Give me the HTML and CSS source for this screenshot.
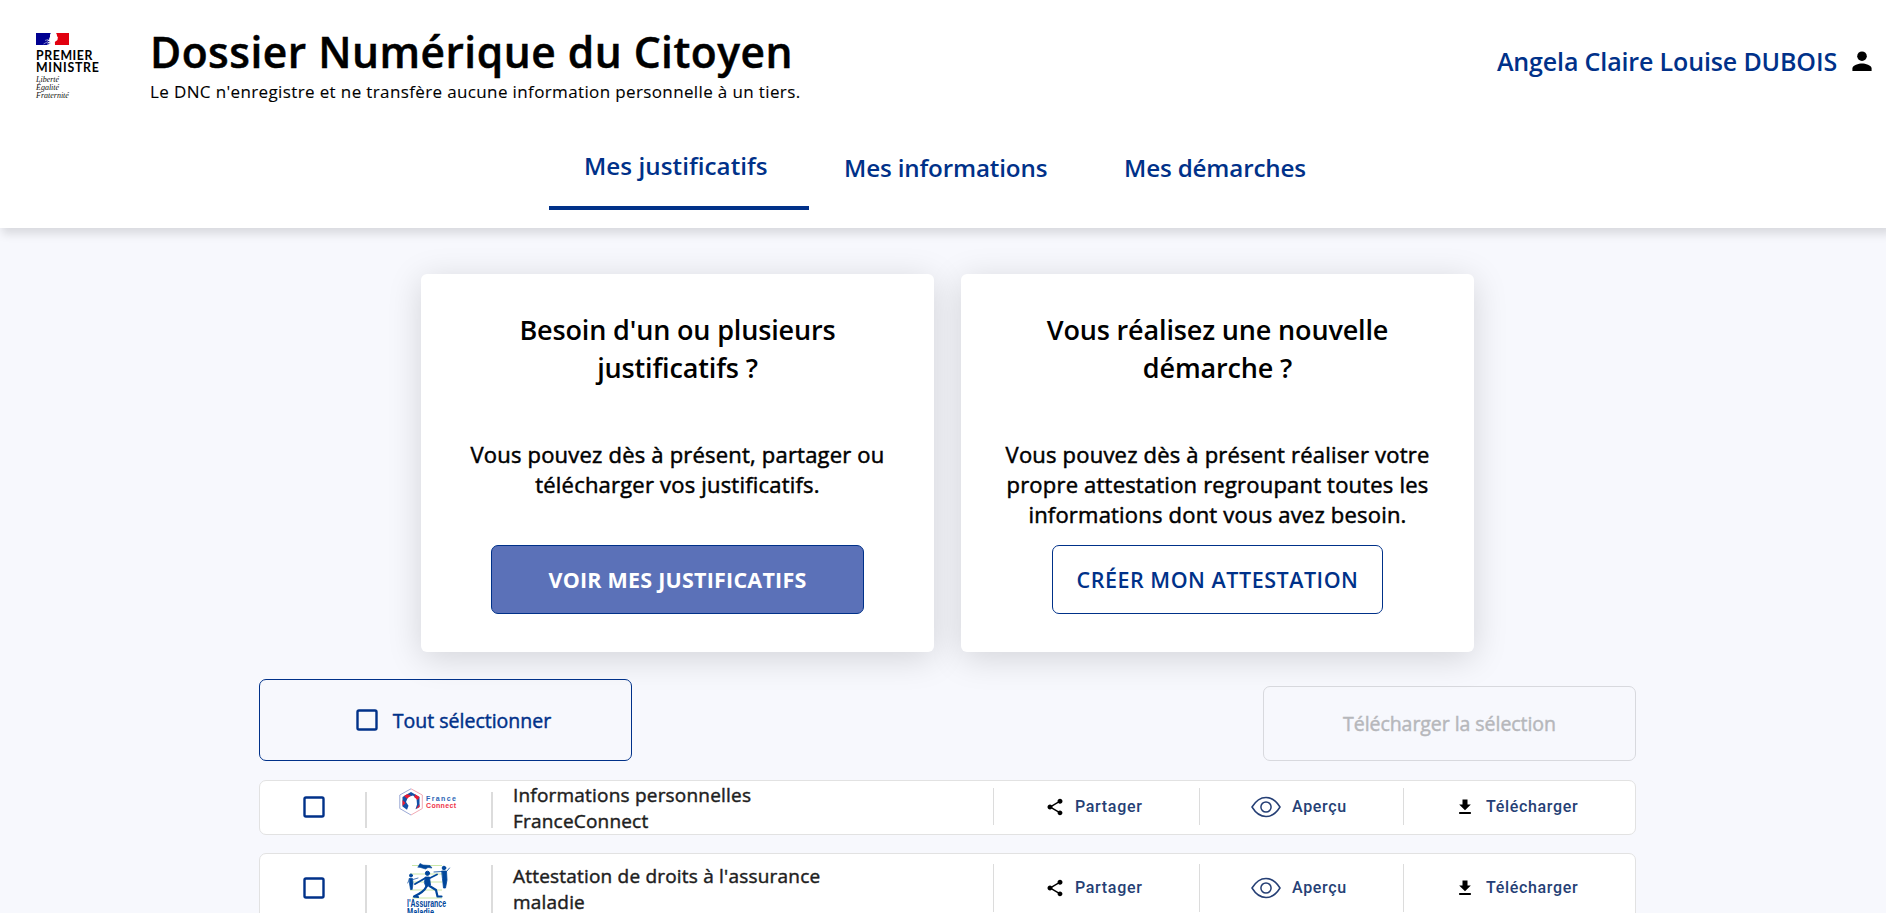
FILE: index.html
```html
<!DOCTYPE html>
<html lang="fr">
<head>
<meta charset="utf-8">
<title>Dossier Numérique du Citoyen</title>
<link rel="stylesheet" href="styles.css">
</head>
<body>
<svg class="defs" width="0" height="0">
  <symbol id="i-check" viewBox="0 0 22 22"><rect x="1.500" y="1.500" width="19" height="19" rx="1.500" fill="none" stroke="#003189" stroke-width="2.400"/></symbol>
  <symbol id="i-share" viewBox="0 0 24 24"><path d="M18 16.080c-.76 0-1.440.3-1.960.77L8.910 12.700c.05-.23.09-.46.09-.7s-.04-.47-.09-.7l7.050-4.110c.54.5 1.250.81 2.040.81 1.660 0 3-1.340 3-3s-1.340-3-3-3-3 1.340-3 3c0 .24.04.47.09.7L8.040 9.810C7.500 9.310 6.790 9 6 9c-1.660 0-3 1.340-3 3s1.340 3 3 3c.79 0 1.500-.31 2.040-.81l7.120 4.160c-.05.21-.08.43-.08.65 0 1.610 1.310 2.920 2.920 2.920s2.920-1.310 2.920-2.920-1.310-2.920-2.920-2.920z"/></symbol>
  <symbol id="i-eye" viewBox="0 0 30 22"><g fill="none" stroke="#253f75" stroke-width="1.500"><path d="M1 11C5 4.500 9.500 1.500 15 1.500S25 4.500 29 11C25 17.500 20.500 20.500 15 20.500S5 17.500 1 11z"/><circle cx="15" cy="11" r="5.100"/></g></symbol>
  <symbol id="i-download" viewBox="0 0 24 24"><path d="M19 9h-4V3H9v6H5l7 7 7-7zM5 18v2.300h14V18H5z"/></symbol>
</svg>
<header class="header">
  <div class="masthead">
    <div class="brand">
      <svg class="flag" viewBox="0 0 33 12"><rect width="15" height="12" fill="#000091"/><rect x="18.500" width="14.500" height="12" fill="#e1000f"/><path d="M15 0H20c.8.8 1 2 1 3 1 1.500 1.200 1.800.6 2.500 0 1.300-.2 2.200-1.200 2.200l-1.600 1.300.2 3H11.500l2.500-2.200-3.500.7 3.500-2.500-3-.2 2.700-1.800-.7-.4 1-1.500C14 2.300 13.800 1 15 0z" fill="#fff"/><path d="M7.500 11l4.500-2.500M11 12l3.500-2M9 7.500l3-1" stroke="#9a9ad6" stroke-width=".8"/></svg>
      <div class="ministry"><div class="premier">PREMIER</div><div>MINISTRE</div></div>
      <div class="motto"><div>Liberté</div><div>Égalité</div><div>Fraternité</div></div>
    </div>
    <div class="heading">
      <h1 class="site-title">Dossier Numérique du Citoyen</h1>
      <p class="site-note">Le DNC n'enregistre et ne transfère aucune information personnelle à un tiers.</p>
    </div>
    <div class="user">
      <span>Angela Claire Louise DUBOIS</span>
      <svg class="user-icon" viewBox="0 0 20 20"><circle cx="10" cy="5.200" r="4.800"/><path d="M.4 20v-2.400c0-3.200 6.400-5 9.600-5s9.600 1.800 9.600 5V20z"/></svg>
    </div>
  </div>
  <nav class="tabs">
    <a class="tab tab-active">Mes justificatifs</a>
    <a class="tab tab-info">Mes informations</a>
    <a class="tab tab-steps">Mes démarches</a>
  </nav>
</header>
<main class="page">
  <section class="cards">
    <article class="card">
      <h2 class="card-title">Besoin d'un ou plusieurs<br>justificatifs ?</h2>
      <p class="card-text">Vous pouvez dès à présent, partager ou<br>télécharger vos justificatifs.</p>
      <button class="btn btn-primary">VOIR MES JUSTIFICATIFS</button>
    </article>
    <article class="card">
      <h2 class="card-title">Vous réalisez une nouvelle<br>démarche ?</h2>
      <p class="card-text">Vous pouvez dès à présent réaliser votre<br>propre attestation regroupant toutes les<br>informations dont vous avez besoin.</p>
      <button class="btn btn-outline">CRÉER MON ATTESTATION</button>
    </article>
  </section>
  <section class="documents">
    <div class="toolbar">
      <button class="select-all"><svg class="checkbox"><use href="#i-check"/></svg>Tout sélectionner</button>
      <button class="download-all">Télécharger la sélection</button>
    </div>
    <div class="row row-short">
      <div class="cell-check"><svg class="checkbox"><use href="#i-check"/></svg></div>
      <div class="cell-logo">
        <svg class="logo-fc" viewBox="0 0 58 28">
          <path d="M12 .8L.8 7v13.500L12 27" fill="none" stroke="#8f9fd0" stroke-width=".9"/>
          <path d="M12 .8L23.300 7v13.500L12 27" fill="none" stroke="#f0a0ac" stroke-width=".9"/>
          <path d="M12 4L3.500 9v9.500L8 21.800l1.500-4L7 14l2-5 5-1.500 3.500 3 .5 6-1.500 4.800 4-2.300V9z" fill="#1250a8"/>
          <path d="M8 6.300l4 1.200-4 3.200-3-2.600zM16 6.300l4.500 2.600-1.700 3-3.500-2.700zM3.500 12l3 3-3 3zM20.500 16v3L17 21z" fill="#ea1c34"/>
          <text x="27" y="12.800" fill="#2a62b4" textLength="30">France</text>
          <text x="27" y="20" fill="#ee3449" textLength="30">Connect</text>
        </svg>
      </div>
      <div class="cell-name">Informations personnelles<br>FranceConnect</div>
      <div class="action action-share"><svg class="icon"><use href="#i-share"/></svg>Partager</div>
      <div class="action action-view"><svg class="icon-eye"><use href="#i-eye"/></svg>Aperçu</div>
      <div class="action action-get"><svg class="icon"><use href="#i-download"/></svg>Télécharger</div>
    </div>
    <div class="row row-tall">
      <div class="cell-check"><svg class="checkbox"><use href="#i-check"/></svg></div>
      <div class="cell-logo">
        <svg class="logo-am" viewBox="0 0 44 56">
          <path d="M5 3.500h30M3 12h36M3 20h32M3 28h32M5 36h30" stroke="#c9e6a6" stroke-width="1"/>
          <g fill="#00469b" stroke="#00469b" stroke-linejoin="round" stroke-linecap="round">
            <path d="M11 5l2-3.500 3 1.500 7 .5 2 2.500-4-.5-2.500 1.500-5-1.500z" stroke-width=".6"/>
            <circle cx="20.500" cy="11.300" r="2.100"/>
            <path d="M18.500 15l4 0 1 8-4.500 2-1.500-4z" stroke-width=".8"/>
            <path d="M18.500 16L8 22M23 16l7-3.500" fill="none" stroke-width="1.900"/>
            <path d="M19.500 24.500Q17 30 7 34.500M7 34.500l4 .5M22.500 24l6.500 4 1.500 6.500h4" fill="none" stroke-width="2.200"/>
            <circle cx="4" cy="13.500" r="1.500"/>
            <path d="M2.500 16.500h3l.5 5-.8 6H3.500l-1-6zM6 17.500l5-1.500M2.500 17L.7 21" stroke-width=".7"/>
            <circle cx="37" cy="6" r="1.800"/>
            <path d="M35 9h4.500l.5 9-1.500 8h-2l-1-9zM35 9.500l-8 .5M40 9l2.500-3" stroke-width=".8"/>
          </g>
          <text x="0" y="44.500" textLength="39" lengthAdjust="spacingAndGlyphs">l'Assurance</text>
          <text x="0" y="53.500" textLength="27" lengthAdjust="spacingAndGlyphs">Maladie</text>
        </svg>
      </div>
      <div class="cell-name">Attestation de droits à l'assurance<br>maladie</div>
      <div class="action action-share"><svg class="icon"><use href="#i-share"/></svg>Partager</div>
      <div class="action action-view"><svg class="icon-eye"><use href="#i-eye"/></svg>Aperçu</div>
      <div class="action action-get"><svg class="icon"><use href="#i-download"/></svg>Télécharger</div>
    </div>
  </section>
</main>
</body>
</html>
```
FILE: styles.css
```css
* { box-sizing: border-box; }
body {
  margin: 0;
  height: 913px;
  overflow: hidden;
  background: #f7f8fd;
  color: #000;
  font-family: "Open Sans", sans-serif;
  white-space: nowrap;
}
h1, h2, p { margin: 0; font-weight: inherit; }
button { padding: 0; font: inherit; }
svg { display: block; flex: none; }
.defs { position: absolute; }

/* Header */
.header {
  height: 228px;
  background: #fff;
  box-shadow: 4px 4px 9px 2px rgba(0, 0, 0, .12);
}
.masthead { display: flex; height: 125px; padding-left: 36px; }
.brand { width: 114px; padding-top: 33px; }
.flag { width: 33px; height: 12px; }
.ministry {
  margin-top: 5px;
  font: 700 12.300px/12px Lato, sans-serif;
  letter-spacing: .75px;
}
.premier { letter-spacing: .6px; }
.motto {
  margin-top: 2px;
  font: italic 400 8px/8px "Liberation Serif", serif;
  color: #111;
}
.heading { flex: 1; padding-top: 27px; }
.site-title {
  font-size: 42.500px;
  line-height: 49px;
  font-weight: 600;
  letter-spacing: .5px;
  -webkit-text-stroke: .5px;
}
.site-note {
  margin-top: 3px;
  font-size: 17px;
  line-height: 25px;
  letter-spacing: .37px;
  -webkit-text-stroke: .1px;
}
.user {
  display: flex;
  align-items: flex-start;
  gap: 15px;
  padding: 45px 14px 0 0;
  color: #003189;
  font-size: 25px;
  line-height: 32px;
  font-weight: 600;
  letter-spacing: -.14px;
}
.user-icon { width: 20px; height: 20px; margin-top: 6px; fill: #000; }
.tabs { display: flex; height: 85px; padding-left: 549px; }
.tab {
  width: 258px;
  padding-left: 35px;
  color: #003189;
  font-size: 24.200px;
  line-height: 85px;
  font-weight: 600;
  letter-spacing: -.15px;
}
.tab-active { width: 260px; line-height: 81px; border-bottom: 4px solid #003189; letter-spacing: .05px; }
.tab-info { width: 280px; }

/* Cards */
.page { padding: 46px 250px 0 259px; }
.cards { display: flex; justify-content: center; gap: 27px; }
.card {
  display: flex;
  flex-direction: column;
  align-items: center;
  width: 513px;
  height: 378px;
  padding-top: 37px;
  border-radius: 6px;
  background: #fff;
  box-shadow: 0 6px 34px rgba(0, 0, 0, .15);
  text-align: center;
}
.card + .card { clip-path: inset(-80px -80px -80px -27px); }
.card-title { font-size: 27px; line-height: 38px; font-weight: 600; letter-spacing: -.15px; }
.card-text {
  height: 90px;
  margin-top: 52px;
  font-size: 22px;
  line-height: 30px;
  letter-spacing: .2px;
  -webkit-text-stroke: .5px;
}
.btn {
  height: 69px;
  margin-top: 16px;
  border: 1px solid #003189;
  border-radius: 7px;
  font-size: 21.500px;
}
.btn-primary { width: 373px; background: #5b71b8; color: #fff; font-weight: 700; letter-spacing: .22px; }
.btn-outline { width: 331px; background: #fff; color: #003189; font-weight: 600; letter-spacing: .52px; }

/* Document list */
.toolbar { display: flex; justify-content: space-between; align-items: flex-end; margin-top: 27px; }
.select-all,
.download-all {
  display: flex;
  align-items: center;
  justify-content: center;
  width: 373px;
  border-radius: 7px;
  background: none;
  font-size: 19.500px;
  -webkit-text-stroke: .45px;
}
.select-all { height: 82px; padding-left: 16px; gap: 15px; border: 1px solid #003189; color: #003189; }
.download-all { height: 75px; border: 1px solid #d8d9de; color: #b6b7bb; letter-spacing: -.05px; }
.checkbox { width: 22px; height: 22px; }
.row {
  display: flex;
  align-items: center;
  width: 1377px;
  border: 1px solid #e2e2e2;
  border-radius: 7px;
  background: #fff;
}
.row-short { height: 55px; margin-top: 19px; }
.row-tall { height: 71px; margin-top: 18px; }
.cell-check { display: flex; align-items: center; width: 105px; height: 100%; padding: 0 0 2px 43px; }
.cell-logo {
  align-self: flex-start;
  width: 128px;
  height: 36px;
  margin-top: 11px;
  border: solid #dcdcdc;
  border-width: 0 2px;
}
.row-tall .cell-logo { height: 50px; }
.logo-fc { width: 58px; height: 28px; margin: -4px 0 0 32px; }
.logo-fc text { font: 700 7px "Liberation Sans", sans-serif; }
.logo-am { width: 44px; height: 56px; margin: -3px 0 0 40px; }
.logo-am text { font: 700 10px "Liberation Sans", sans-serif; fill: #00469b; }
.cell-name {
  width: 500px;
  padding-left: 20px;
  color: #1e1e1e;
  font-size: 19px;
  line-height: 26px;
  letter-spacing: .2px;
  -webkit-text-stroke: .45px;
}
.action {
  display: flex;
  align-items: center;
  height: 37px;
  margin-bottom: 2px;
  border-left: 1px solid #dcdcdc;
  color: #253f75;
  font: 500 16px/20px Roboto, sans-serif;
  letter-spacing: .68px;
}
.row-tall .action { height: 48px; }
.action-share { width: 206px; padding-left: 51px; gap: 10px; }
.action-view { width: 204px; padding-left: 51px; gap: 11px; }
.action-get { flex: 1; padding-left: 51px; gap: 11px; }
.icon { width: 20px; height: 20px; fill: #000; }
.icon-eye { width: 30px; height: 22px; }
```
